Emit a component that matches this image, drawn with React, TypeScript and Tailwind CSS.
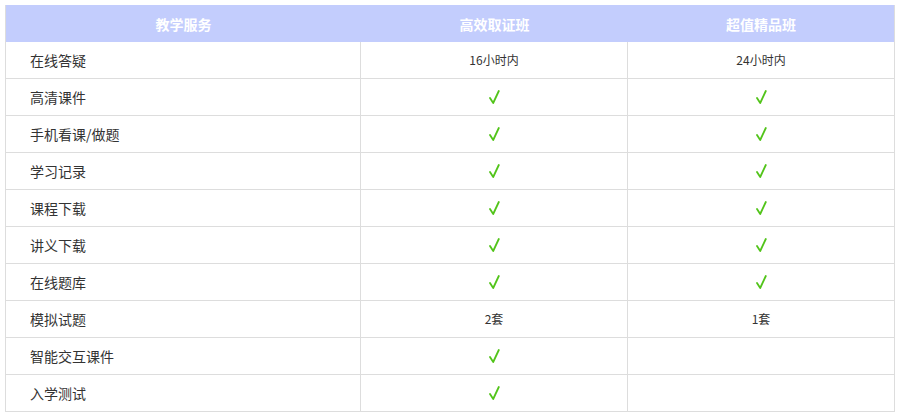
import * as React from 'react'

type Cell = string | boolean | null

interface Row {
    name: string
    basic: Cell
    premium: Cell
}

const rows: Row[] = [
    { name: '在线答疑', basic: '16小时内', premium: '24小时内' },
    { name: '高清课件', basic: true, premium: true },
    { name: '手机看课/做题', basic: true, premium: true },
    { name: '学习记录', basic: true, premium: true },
    { name: '课程下载', basic: true, premium: true },
    { name: '讲义下载', basic: true, premium: true },
    { name: '在线题库', basic: true, premium: true },
    { name: '模拟试题', basic: '2套', premium: '1套' },
    { name: '智能交互课件', basic: true, premium: null },
    { name: '入学测试', basic: true, premium: null }
]

function Check() {
    return (
        <svg width="11" height="15" viewBox="0 0 11 15" fill="none">
            <path
                d="M1 8 L4.2 13 L9.8 1"
                stroke="#52c41a"
                strokeWidth="1.8"
                strokeLinecap="round"
                strokeLinejoin="round"
            />
        </svg>
    )
}

function Value({ value }: { value: Cell }) {
    if (value === true) return <Check />
    if (!value) return null
    return <span className="text-[12px] leading-none text-[#333]">{value}</span>
}

export default function App() {
    return (
        <div
            className="min-h-[418px] bg-white pt-[5px] pl-[5px]"
            style={{ fontFamily: '"Noto Sans CJK SC", "Noto Sans", sans-serif' }}
        >
            <div className="w-[890px] border-l border-r border-[#dddddd]">
                <div className="grid h-[37px] grid-cols-[355px_267px_266px] items-center bg-[#c3cdfd] text-[14px] font-bold leading-none text-white">
                    <div className="text-center">教学服务</div>
                    <div className="text-center">高效取证班</div>
                    <div className="text-center">超值精品班</div>
                </div>

                {rows.map((row) => (
                    <div
                        key={row.name}
                        className="grid h-[37px] grid-cols-[355px_267px_266px] border-b border-[#dddddd]"
                    >
                        <div className="flex items-center border-r border-[#dddddd] pl-6 text-[14px] leading-none text-[#333]">
                            {row.name}
                        </div>
                        <div className="flex items-center justify-center border-r border-[#dddddd]">
                            <Value value={row.basic} />
                        </div>
                        <div className="flex items-center justify-center">
                            <Value value={row.premium} />
                        </div>
                    </div>
                ))}
            </div>
        </div>
    )
}
